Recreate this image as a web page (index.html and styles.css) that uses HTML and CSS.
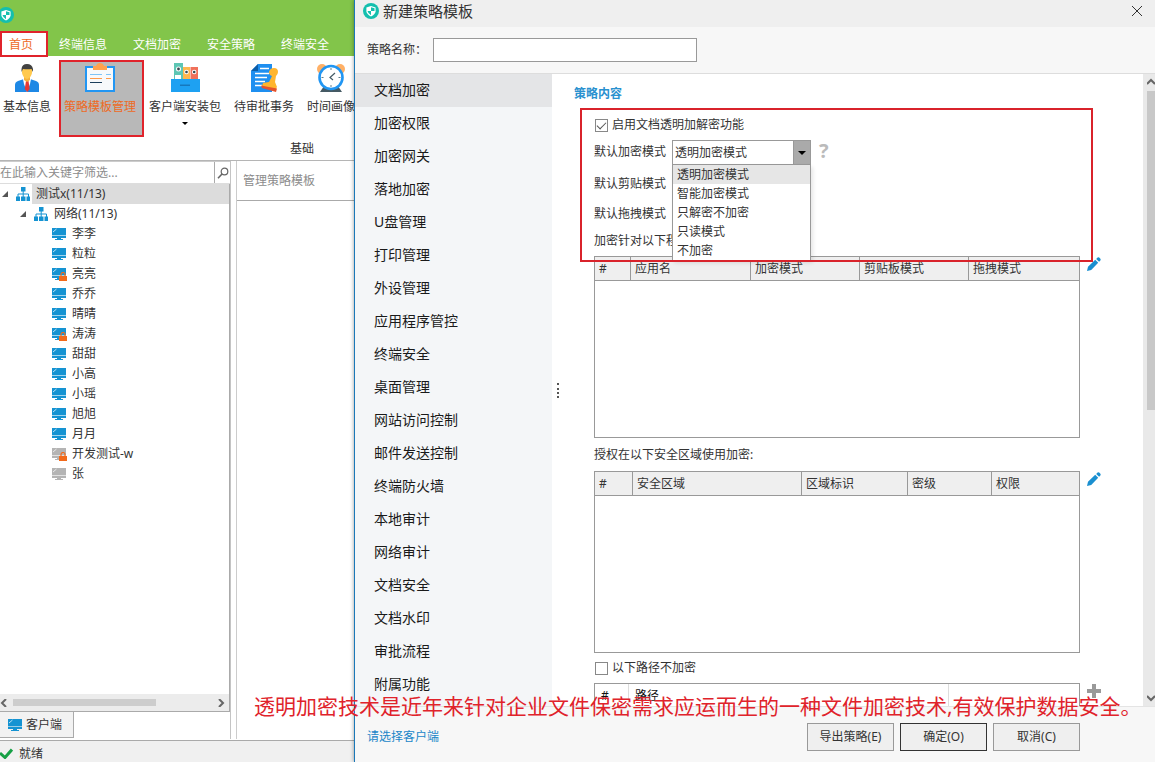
FILE: index.html
```html
<!DOCTYPE html>
<html lang="zh-CN">
<head>
<meta charset="utf-8">
<title>新建策略模板</title>
<link rel="stylesheet" href="styles.css">
</head>
<body>
<svg class="sprite" aria-hidden="true">
  <symbol id="logo" viewBox="0 0 16 16">
    <circle cx="8" cy="8" r="8" fill="#14bfae"/>
    <path d="M8 3 12.600 4.500V8.500Q12 11.500 8 13.500 4 11.500 3.400 8.500V4.500Z" fill="#fff"/>
    <path d="M8 8V4.200L11.500 5.300V8ZM8 8H4.500Q5 10.500 8 12.200Z" fill="#14bfae"/>
  </symbol>
  <symbol id="org" viewBox="0 0 14 14">
    <path d="M5 0h4.500v4.500H5zM0 9.500h4V14H0zM5 9.500h4.500V14H5zM10.500 9.500H14V14h-3.500z" fill="#1593d2"/>
    <path d="M7.200 4v6M2 10V7h10.500v3" fill="none" stroke="#1593d2"/>
  </symbol>
  <symbol id="screen" viewBox="0 0 14 12">
    <path d="M0 0h14v7H0zM0 8h14v2H0zM5 10h4v1h2v1H3v-1h2z" fill="currentColor"/>
    <path d="M0 7h14v1H0z" fill="currentColor" opacity=".4"/>
    <path d="M1 4 4.500 1" stroke="#fff" stroke-opacity=".7" fill="none"/>
  </symbol>
  <symbol id="lock" viewBox="0 0 8 9">
    <path d="M2 4V2.500a2 2 0 0 1 4 0V4" fill="none" stroke="#f26a1b" stroke-width="1.200"/>
    <path d="M0 4h8v5H0z" fill="#f26a1b"/>
  </symbol>
  <symbol id="pencil" viewBox="0 0 14 14">
    <path d="M0 14 1 9.800 8.200 2.800 11.200 5.800 4.200 13ZM9.200 1.900 10.600.600Q11.400 0 12.200.600L13.400 1.800Q14 2.600 13.400 3.400L12.100 4.800Z" fill="#1a8fd0"/>
  </symbol>
</svg>

<div class="desktop">
  <section class="main-window">
    <header class="main-title">
      <svg class="main-logo"><use href="#logo"/></svg>
      <nav class="tabs">
        <button class="tab tab-active">首页</button>
        <button class="tab">终端信息</button>
        <button class="tab">文档加密</button>
        <button class="tab">安全策略</button>
        <button class="tab">终端安全</button>
      </nav>
    </header>

    <div class="ribbon">
      <div class="tools">
        <button class="tool">
          <svg viewBox="0 0 30 30">
            <path d="M3 30v-7q0-3 3-4l6-2h6l6 2q3 1 3 4v7z" fill="#1e88e5"/>
            <path d="M11 17h8l-1 5-3 8-3-8z" fill="#fff"/>
            <path d="M14 19h2.500l1.200 8-2.500 3-2.500-3z" fill="#e53935"/>
            <path d="M12 13h6v5l-3 2-3-2z" fill="#f5b13d"/>
            <path d="M10 8q0-5 5-5t5 5v3q-1 5-5 6-4-1-5-6z" fill="#ffc94f"/>
            <path d="M9.500 10V7Q10 2 15 2t6 5v3l-1.500-3q-4 .5-8.500 0z" fill="#424242"/>
          </svg>
          <span>基本信息</span>
        </button>
        <button class="tool tool-active">
          <svg viewBox="0 0 30 30">
            <path d="M1 5h28v24H1z" fill="#f7f9fb" stroke="#2196f3" stroke-width="2"/>
            <path d="M8 8V4h3q1-3 4-3t4 3h3v4z" fill="#ffa24d"/>
            <path d="M5 12.500h12M21 12.500h5" stroke="#7fc4f5"/>
            <path d="M5 16.500h12M21 16.500h5" stroke="#ff9a4a"/>
            <path d="M5 20.500h12" stroke="#1c3f5c"/>
          </svg>
          <span>策略模板管理</span>
        </button>
        <button class="tool">
          <svg viewBox="0 0 30 30">
            <path d="M4 1h9v18H4z" fill="#5ec6b4"/><path d="M5 13h6v5H5z" fill="#fff"/>
            <path d="M13 5h7v14h-7z" fill="#ffb74d"/><path d="M20.500 5H28v14h-7.500z" fill="#f0705a"/>
            <g fill="#fff"><circle cx="8.500" cy="7" r="2.500"/><circle cx="16.500" cy="10" r="2.300"/><circle cx="24.200" cy="10" r="2.300"/></g>
            <g fill="#37474f"><circle cx="8.500" cy="7" r="1.400"/><circle cx="16.500" cy="10" r="1.300"/><circle cx="24.200" cy="10" r="1.300"/></g>
            <path d="M1 17h29v13H1z" fill="#1ea1f2"/><path d="M10 22.500h10V24H10z" fill="#1678bd"/>
          </svg>
          <span>客户端安装包</span>
          <i class="caret"></i>
        </button>
        <button class="tool">
          <svg viewBox="0 0 30 30">
            <path d="M9 2h14v28H2V9z" fill="#1e8ff0"/><path d="M9 2v7H2z" fill="#0d5ea8"/>
            <path d="M11 6.500h9M6 11.500h14M6 15.500h12M6 19.500h10M6 23.500h7" stroke="#fff" stroke-width="1.300"/>
            <path d="M20 10q1-4 5-4t4 4q0 2-2 4l-1 6 2 5-2 3-13-4 1-3 6-1 3-6q-3-1-3-4z" fill="#ffb52e"/>
            <path d="M12 23.500 28 26.500l-1 3.500-14-4z" fill="#e6532c"/>
          </svg>
          <span>待审批事务</span>
        </button>
        <button class="tool">
          <svg viewBox="0 0 30 30">
            <circle cx="6" cy="7" r="5" fill="#ffb066"/><circle cx="24" cy="7" r="5" fill="#ffb066"/>
            <path d="M4 30 8 24h14l4 6z" fill="#455a64"/>
            <circle cx="15" cy="15.500" r="11.500" fill="#fff" stroke="#2196f3" stroke-width="2.600"/>
            <path d="M15 6v2M15 23v2M5.500 15.500h2M22.500 15.500h2" stroke="#607d8b"/>
            <path d="m19 11-5 4.500 3 2.500" stroke="#455a64" stroke-width="1.200" fill="none"/>
          </svg>
          <span>时间画像</span>
        </button>
      </div>
      <p class="ribbon-caption">基础</p>
    </div>

    <div class="workspace">
      <aside class="clients">
        <div class="search">
          <input type="text" placeholder="在此输入关键字筛选..." aria-label="在此输入关键字筛选">
          <button aria-label="搜索">
            <svg viewBox="0 0 12 12"><circle cx="7.500" cy="4.500" r="3.300" fill="none" stroke="#666" stroke-width="1.200"/><path d="M5 7 1 11.300" stroke="#666" stroke-width="1.600"/></svg>
          </button>
        </div>
        <ul class="tree">
          <li class="node node-root"><i class="twist"></i><svg class="org"><use href="#org"/></svg><span class="node-name">测试x(11/13)</span></li>
          <li class="node node-group"><i class="twist"></i><svg class="org"><use href="#org"/></svg><span class="node-name">网络(11/13)</span></li>
          <li class="node node-leaf"><span class="pc"><svg><use href="#screen"/></svg></span><span class="node-name">李李</span></li>
          <li class="node node-leaf"><span class="pc"><svg><use href="#screen"/></svg></span><span class="node-name">粒粒</span></li>
          <li class="node node-leaf"><span class="pc"><svg><use href="#screen"/></svg><svg class="lock"><use href="#lock"/></svg></span><span class="node-name">亮亮</span></li>
          <li class="node node-leaf"><span class="pc"><svg><use href="#screen"/></svg></span><span class="node-name">乔乔</span></li>
          <li class="node node-leaf"><span class="pc"><svg><use href="#screen"/></svg></span><span class="node-name">晴晴</span></li>
          <li class="node node-leaf"><span class="pc"><svg><use href="#screen"/></svg><svg class="lock"><use href="#lock"/></svg></span><span class="node-name">涛涛</span></li>
          <li class="node node-leaf"><span class="pc"><svg><use href="#screen"/></svg></span><span class="node-name">甜甜</span></li>
          <li class="node node-leaf"><span class="pc"><svg><use href="#screen"/></svg></span><span class="node-name">小高</span></li>
          <li class="node node-leaf"><span class="pc"><svg><use href="#screen"/></svg></span><span class="node-name">小瑶</span></li>
          <li class="node node-leaf"><span class="pc"><svg><use href="#screen"/></svg></span><span class="node-name">旭旭</span></li>
          <li class="node node-leaf"><span class="pc"><svg><use href="#screen"/></svg></span><span class="node-name">月月</span></li>
          <li class="node node-leaf"><span class="pc pc-off"><svg><use href="#screen"/></svg><svg class="lock"><use href="#lock"/></svg></span><span class="node-name">开发测试-w</span></li>
          <li class="node node-leaf"><span class="pc pc-off"><svg><use href="#screen"/></svg></span><span class="node-name">张</span></li>
        </ul>
        <div class="hscroll">
          <svg viewBox="0 0 8 8"><path d="M6 0 2 4l4 4" fill="none" stroke="#666" stroke-width="2"/></svg>
          <span class="hscroll-thumb"></span>
          <svg viewBox="0 0 8 8"><path d="m2 0 4 4-4 4" fill="none" stroke="#666" stroke-width="2"/></svg>
        </div>
        <div class="dock">
          <button class="dock-tab"><span class="pc"><svg><use href="#screen"/></svg></span>客户端</button>
        </div>
      </aside>
      <div class="templates">
        <h2 class="templates-title">管理策略模板</h2>
      </div>
    </div>

    <footer class="status">
      <svg viewBox="0 0 13 11"><path d="M0 5 5 9.500 12 1.500" fill="none" stroke="#16a045" stroke-width="3"/></svg>
      <span>就绪</span>
    </footer>
  </section>

  <section class="dialog" role="dialog" aria-labelledby="dialog-title">
    <header class="dialog-head">
      <svg class="dialog-logo"><use href="#logo"/></svg>
      <h1 id="dialog-title">新建策略模板</h1>
      <button class="close" aria-label="关闭"><svg viewBox="0 0 12 12"><path d="m1 1 10 10M11 1 1 11" stroke="#333" fill="none"/></svg></button>
    </header>
    <div class="name-row">
      <label for="policy-name">策略名称：</label>
      <input id="policy-name" type="text">
    </div>

    <div class="dialog-body">
      <nav class="menu">
        <button class="menu-item menu-item-active">文档加密</button>
        <button class="menu-item">加密权限</button>
        <button class="menu-item">加密网关</button>
        <button class="menu-item">落地加密</button>
        <button class="menu-item">U盘管理</button>
        <button class="menu-item">打印管理</button>
        <button class="menu-item">外设管理</button>
        <button class="menu-item">应用程序管控</button>
        <button class="menu-item">终端安全</button>
        <button class="menu-item">桌面管理</button>
        <button class="menu-item">网站访问控制</button>
        <button class="menu-item">邮件发送控制</button>
        <button class="menu-item">终端防火墙</button>
        <button class="menu-item">本地审计</button>
        <button class="menu-item">网络审计</button>
        <button class="menu-item">文档安全</button>
        <button class="menu-item">文档水印</button>
        <button class="menu-item">审批流程</button>
        <button class="menu-item">附属功能</button>
      </nav>
      <div class="splitter"><span></span></div>

      <div class="policy">
        <h2 class="policy-title">策略内容</h2>
        <div class="policy-main">
          <div class="modes">
            <div class="check-row">
              <input id="enable" type="checkbox" checked>
              <label for="enable">启用文档透明加解密功能</label>
            </div>
            <div class="mode-row">
              <label for="mode">默认加密模式</label>
              <div class="combo">
                <select id="mode"><option>透明加密模式</option></select>
                <ul class="options">
                  <li class="option option-active">透明加密模式</li>
                  <li class="option">智能加密模式</li>
                  <li class="option">只解密不加密</li>
                  <li class="option">只读模式</li>
                  <li class="option">不加密</li>
                </ul>
              </div>
              <span class="help">?</span>
            </div>
            <p class="mode-line">默认剪贴模式</p>
            <p class="mode-line">默认拖拽模式</p>
            <p class="mode-note">加密针对以下程</p>
          </div>

          <div class="grid-row">
            <div class="grid-box">
              <table class="grid">
                <colgroup><col class="w-36"><col class="w-120"><col class="w-109"><col class="w-109"><col></colgroup>
                <thead><tr><th>#</th><th>应用名</th><th>加密模式</th><th>剪贴板模式</th><th>拖拽模式</th></tr></thead>
              </table>
            </div>
            <button class="edit" aria-label="编辑"><svg><use href="#pencil"/></svg></button>
          </div>

          <p class="zone-label">授权在以下安全区域使用加密:</p>
          <div class="grid-row">
            <div class="grid-box">
              <table class="grid">
                <colgroup><col class="w-38"><col class="w-169"><col class="w-106"><col class="w-84"><col></colgroup>
                <thead><tr><th>#</th><th>安全区域</th><th>区域标识</th><th>密级</th><th>权限</th></tr></thead>
              </table>
            </div>
            <button class="edit" aria-label="编辑"><svg><use href="#pencil"/></svg></button>
          </div>

          <div class="check-row path-check">
            <input id="paths" type="checkbox">
            <label for="paths">以下路径不加密</label>
          </div>
          <div class="grid-row">
            <div class="grid-box">
              <table class="grid grid-plain">
                <colgroup><col class="w-34"><col class="w-320"><col></colgroup>
                <thead><tr><th>#</th><th>路径</th><th></th></tr></thead>
              </table>
            </div>
            <button class="edit" aria-label="添加"><svg viewBox="0 0 14 14"><path d="M5 0h4v5h5v4H9v5H5V9H0V5h5z" fill="#999"/></svg></button>
          </div>
        </div>
      </div>

      <div class="vscroll">
        <svg viewBox="0 0 8 8"><path d="M0 6l4-4 4 4" fill="none" stroke="#666" stroke-width="2"/></svg>
        <span class="vscroll-thumb"></span>
        <svg viewBox="0 0 8 8"><path d="M0 2l4 4 4-4" fill="none" stroke="#666" stroke-width="2"/></svg>
      </div>
    </div>

    <footer class="dialog-foot">
      <a href="#">请选择客户端</a>
      <button class="btn">导出策略(E)</button>
      <button class="btn btn-default">确定(O)</button>
      <button class="btn">取消(C)</button>
    </footer>
  </section>

  <p class="banner">透明加密技术是近年来针对企业文件保密需求应运而生的一种文件加密技术,有效保护数据安全。</p>
</div>
</body>
</html>
```
FILE: styles.css
```css
* { box-sizing: border-box; }
body, h1, h2, p, ul { margin: 0; padding: 0; font-weight: 400; }
ul { list-style: none; }
body, button, input, select {
  font-family: "Noto Sans", "Noto Sans CJK SC", sans-serif;
  font-size: 12px;
  color: #333;
}
body { line-height: 20px; background: #fff; }
button { border: 0; padding: 0; background: none; line-height: inherit; white-space: nowrap; }
svg { display: block; flex: none; }
.sprite { position: absolute; width: 0; height: 0; }

.desktop { position: relative; display: flex; height: 100vh; overflow: hidden; }

/* main window */
.main-window { flex: 0 0 354px; display: flex; flex-direction: column; overflow: hidden; }
.main-title { background: #82c54a; display: flex; flex-direction: column; }
.main-logo { width: 16px; height: 16px; margin: 7px 0 9px -2px; }
.tabs { display: flex; height: 24px; }
.tab { position: relative; padding: 2px 13px 0; color: #fff; }
.tab-active { padding-left: 9px; color: #ee6a1f; background: #fff; }
.tab-active::after {
  content: ""; position: absolute; inset: -1px -2px -1px 0;
  border: 2px solid #e0232b;
}

.ribbon { height: 105px; display: flex; flex-direction: column; justify-content: space-between; border-bottom: 1px solid #b5b5b5; }
.tools { display: flex; align-items: flex-start; gap: 13px; padding: 6px 0 0 3px; }
.tool { position: relative; display: flex; flex-direction: column; align-items: center; gap: 5px; flex: none; }
.tool svg { width: 30px; height: 30px; }
.tool-active { color: #ee6a1f; }
.tool-active::before {
  content: ""; position: absolute; z-index: -1; inset: -2px -8px -20px -5px;
  border: 2px solid #e0232b; background: #b8b8b8;
}
.caret { border: 3px solid transparent; border-top-color: #000; border-bottom: 0; }
.ribbon-caption { padding-left: 290px; line-height: 22px; }

.workspace { flex: 1; min-height: 0; display: flex; gap: 5px; border-bottom: 1px solid #aaa; padding-bottom: 1px; }
.clients { flex: 0 0 231px; display: flex; flex-direction: column; border-right: 1px solid #c4c4c4; }
.search { display: flex; height: 23px; border-bottom: 1px solid #ddd; border-top: 1px solid #ccc; }
.search input { flex: 1; min-width: 0; border: 0; padding: 0; outline: 0; }
.search input::placeholder { color: #8c8c8c; }
.search button { width: 16px; border-left: 1px solid #aaa; display: grid; place-items: center; }
.search button svg { width: 12px; height: 12px; }
.tree { flex: 1; border-right: 1px solid #aaa; }
.node { display: flex; align-items: center; height: 20px; }
.node-name { padding-left: 4px; }
.node-root { padding-left: 2px; }
.node-root .node-name { flex: 1; background: #dcdcdc; }
.node-group { padding-left: 20px; }
.node-group .node-name { padding-left: 6px; }
.node-leaf { padding-left: 52px; }
.node-leaf .node-name { padding-left: 6px; }
.twist { border: 3px solid transparent; border-right-color: #555; border-bottom-color: #555; margin-right: 8px; }
.org { width: 14px; height: 14px; margin-right: 2px; }
.node-group .org { margin-right: 0; }
.pc { position: relative; color: #1593d2; }
.pc svg { width: 14px; height: 12px; }
.pc-off { color: #b4b4b4; }
.pc .lock { position: absolute; right: -1px; bottom: -1px; width: 8px; height: 9px; }
.hscroll { display: flex; align-items: center; height: 18px; padding: 0 4px 0 0; background: #ececec; border: solid #aaa; border-width: 0 1px 1px 0; }
.hscroll svg { width: 8px; height: 8px; }
.hscroll-thumb { width: 143px; height: 7px; margin: 0 auto 0 5px; background: #cdcdcd; }
.dock { height: 27px; }
.dock-tab { display: flex; align-items: center; gap: 4px; height: 26px; padding: 0 11px 0 8px; background: #f2f2f2; border: solid #aaa; border-width: 0 1px 1px 0; }
.templates { flex: 1; min-width: 0; border-left: 1px solid #ccc; }
.templates-title { padding: 0 6px; font-size: 12px; line-height: 39px; color: #8c8c8c; border-bottom: 1px solid #aaa; }
.status { display: flex; align-items: center; gap: 6px; height: 21px; background: #f0f0f0; padding-top: 4px; }
.status svg { width: 13px; height: 11px; }

/* dialog */
.dialog { position: relative; flex: 1; min-width: 0; display: flex; flex-direction: column; background: #f7f7f7; border-left: 1px solid #1a78b8; box-shadow: 0 0 4px rgba(0, 0, 0, .4); }
.dialog-head { display: flex; align-items: center; gap: 4px; height: 27px; padding: 0 12px 5px 8px; background: #efefef; }
.dialog-logo { width: 16px; height: 16px; }
.dialog-head h1 { font-size: 15px; flex: 1; }
.close svg { width: 12px; height: 12px; }
.name-row { display: flex; align-items: center; gap: 6px; height: 47px; padding: 0 12px; border-bottom: 1px solid #ddd; }
.name-row input { width: 264px; height: 24px; border: 1px solid #999; background: #fff; }
.dialog-body { flex: 1; min-height: 0; display: flex; background: #fff; }
.menu { flex: 0 0 197px; display: flex; flex-direction: column; background: #f4f6f8; overflow: hidden; }
.menu-item { flex: none; height: 33px; padding: 0 19px 2px; text-align: left; font-size: 14px; color: #1a1a1a; }
.menu-item-active { background: #e4e5e7; }
.splitter { width: 22px; display: flex; align-items: center; padding-left: 5px; }
.splitter span { height: 15px; border-left: 2px dotted #555; }

.policy { flex: 1; min-width: 0; overflow: hidden; padding: 10px 42px 0 0; }
.policy-title { font-size: 12px; font-weight: 700; line-height: 20px; color: #2a91cf; }
.policy-main { padding-left: 20px; }
.modes { position: relative; display: flex; flex-direction: column; height: 152px; margin-right: 21px; padding-top: 11px; }
.modes::after {
  content: ""; position: absolute; z-index: 3; inset: 4px -13px -6px -14px;
  border: 2px solid #d9232b; pointer-events: none;
}
.check-row { display: flex; align-items: center; gap: 4px; height: 20px; padding-left: 1px; }
.check-row input { appearance: none; width: 13px; height: 13px; margin: 0; border: 1px solid #888; background: #fff; display: grid; place-items: center; }
.check-row input:checked::before {
  content: ""; width: 8px; height: 4px; margin-bottom: 2px;
  border: solid #555; border-width: 0 0 1px 1px; transform: rotate(-45deg);
}
.mode-row { display: flex; align-items: center; height: 34px; }
.combo { position: relative; margin-left: 6px; width: 139px; }
.combo select {
  appearance: none; display: block; width: 100%; height: 25px; padding: 0 2px;
  border: 1px solid #999; border-radius: 0; color: #333;
  background:
    linear-gradient(#999, #999) right 16px top / 1px 100% no-repeat,
    linear-gradient(#aaa, #aaa) right / 16px 100% no-repeat, #fff;
}
.combo::after {
  content: ""; position: absolute; right: 5px; top: 11px;
  border: 4px solid transparent; border-top-color: #000; border-bottom: 0;
}
.options { position: absolute; z-index: 2; top: 100%; left: 0; right: 0; border: 1px solid #999; border-top: 0; background: #fff; box-shadow: 2px 2px 4px rgba(0, 0, 0, .1); }
.option { padding: 0 4px; line-height: 19px; }
.option-active { background: #e6e6e6; }
.help { margin-left: 8px; padding-bottom: 3px; font-size: 20px; font-weight: 700; color: #bbb; }
.mode-line { line-height: 30px; }
.mode-note { line-height: 24px; }

.grid-row { display: flex; align-items: flex-start; gap: 7px; }
.grid-box { flex: 1; min-width: 0; height: 182px; border: 1px solid #999; background: #fff; }
.grid { width: 100%; table-layout: fixed; border-collapse: separate; border-spacing: 0; }
.grid th { height: 24px; padding: 0 4px; line-height: 20px; text-align: left; font-weight: 400; background: #efefef; border: solid #999; border-width: 0 1px 1px 0; }
.grid th:last-child { border-right: 0; }
.grid-plain th { padding: 0 6px; background: #fff; border-color: #ddd; color: #111; }
.w-34 { width: 34px; }
.w-36 { width: 36px; }
.w-38 { width: 38px; }
.w-84 { width: 84px; }
.w-106 { width: 106px; }
.w-109 { width: 109px; }
.w-120 { width: 120px; }
.w-169 { width: 169px; }
.w-320 { width: 320px; }
.edit { width: 14px; padding-top: 1px; }
.edit svg { width: 14px; height: 14px; }
.zone-label { line-height: 33px; }
.path-check { height: 30px; }

.vscroll { flex: 0 0 12px; display: flex; flex-direction: column; align-items: flex-end; padding: 4px 0; background: #e9e9e9; overflow: hidden; }
.vscroll svg { width: 8px; height: 8px; }
.vscroll-thumb { width: 8px; height: 319px; margin: 5px 0 auto; background: #c8c8c8; }

.dialog-foot { display: flex; align-items: center; gap: 6px; height: 56px; padding: 4px 75px 0 12px; border-top: 1px solid #e4e4e4; }
.dialog-foot a { margin-right: auto; color: #1a86c8; text-decoration: none; }
.btn { width: 87px; height: 28px; border: 1px solid #999; background: #efefef; }
.btn-default { border-color: #333; }

.banner { position: absolute; left: 254px; bottom: 41px; font-size: 21px; line-height: 30px; color: #e0232b; white-space: nowrap; }
```
